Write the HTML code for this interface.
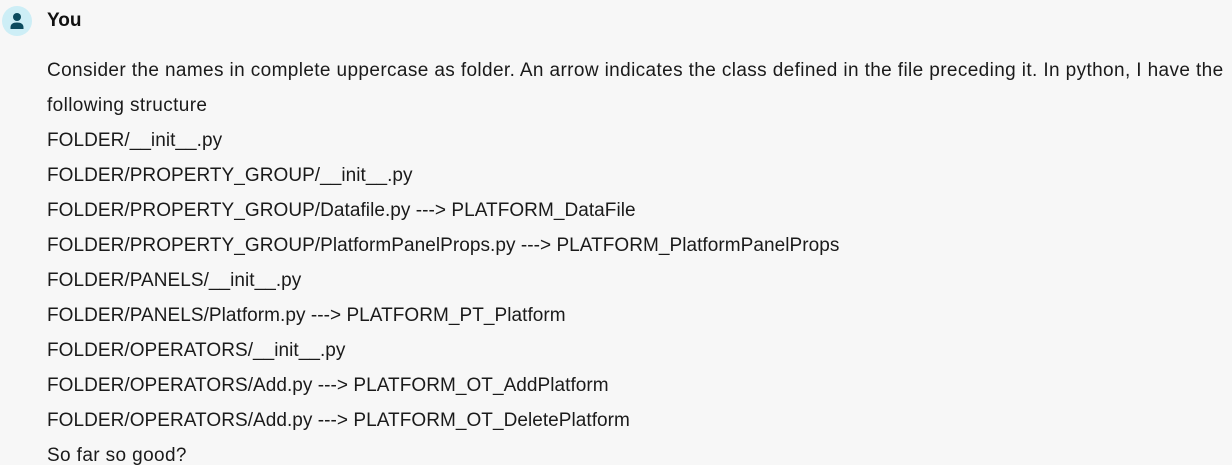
<!DOCTYPE html>
<html><head><meta charset="utf-8"><style>
html,body{margin:0;padding:0;background:#f7f7f7;width:1232px;height:465px;overflow:hidden}
body{font-family:"Liberation Sans",sans-serif;color:#1a1a1a;position:relative}
.av{position:absolute;left:2px;top:6px;width:30px;height:30px;border-radius:50%;background:#cdeef6}
.name{position:absolute;left:47px;top:10px;font-weight:bold;font-size:19px;color:#111}
.txt{position:absolute;left:47px;top:53px;font-size:19px;letter-spacing:0.38px;line-height:35px;white-space:nowrap}
.u{letter-spacing:0.05px}
</style></head><body>
<div class="av"><svg width="30" height="30" viewBox="0 0 30 30"><circle cx="15" cy="11" r="4" fill="#0c4b5e"/><path d="M8.5 21.5c0-3.5 2.5-5 6.5-5s6.5 1.5 6.5 5v1.5h-13z" fill="#0c4b5e"/></svg></div>
<div class="name">You</div>
<div class="txt">Consider the names in complete uppercase as folder. An arrow indicates the class defined in the file preceding it. In python, I have the<br>following structure<span class="u"><br>FOLDER/__init__.py<br>FOLDER/PROPERTY_GROUP/__init__.py<br>FOLDER/PROPERTY_GROUP/Datafile.py ---&gt; PLATFORM_DataFile<br>FOLDER/PROPERTY_GROUP/PlatformPanelProps.py ---&gt; PLATFORM_PlatformPanelProps<br>FOLDER/PANELS/__init__.py<br>FOLDER/PANELS/Platform.py ---&gt; PLATFORM_PT_Platform<br>FOLDER/OPERATORS/__init__.py<br>FOLDER/OPERATORS/Add.py ---&gt; PLATFORM_OT_AddPlatform<br>FOLDER/OPERATORS/Add.py ---&gt; PLATFORM_OT_DeletePlatform</span><br>So far so good?</div>
</body></html>
